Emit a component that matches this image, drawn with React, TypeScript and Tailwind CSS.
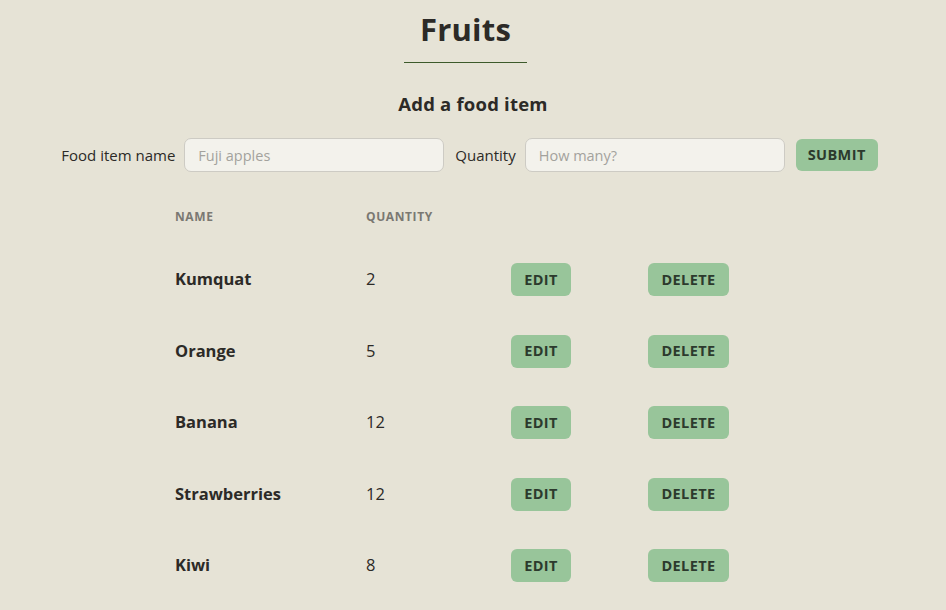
import React from "react";

const items = [
  { name: "Kumquat", qty: 2 },
  { name: "Orange", qty: 5 },
  { name: "Banana", qty: 12 },
  { name: "Strawberries", qty: 12 },
  { name: "Kiwi", qty: 8 },
];

export default function App() {
  return (
    <div
      className="min-h-[610px] w-full bg-[#e6e3d6] text-[#2c2a27]"
      style={{ fontFamily: '"Open Sans", "Noto Sans", sans-serif' }}
    >
      <div className="flex flex-col items-center pt-[9px] pr-[15px]">
        <h1 className="text-[31px] leading-[40px] font-bold tracking-[0.2px]">Fruits</h1>
        <div className="mt-[13px] h-px w-[123px] bg-[#3d5a2b]" />
      </div>
      <h2 className="mt-[29px] text-center text-[18.5px] leading-[24px] font-bold tracking-[0.2px]">Add a food item</h2>
      <form
        className="mt-[22px] flex items-center justify-center pr-[7px]"
        onSubmit={(e) => e.preventDefault()}
      >
        <label className="mr-[9px] text-[15px]">Food item name</label>
        <input
          className="mr-[11px] h-[34px] w-[260px] rounded-[7px] border border-[#cdcbc4] bg-[#f3f2ec] px-[13px] text-[14.5px] placeholder:text-[#a3a29d] outline-none"
          placeholder="Fuji apples"
        />
        <label className="mr-[9px] text-[15px]">Quantity</label>
        <input
          className="mr-[11px] h-[34px] w-[260px] rounded-[7px] border border-[#cdcbc4] bg-[#f3f2ec] px-[13px] text-[14.5px] placeholder:text-[#a3a29d] outline-none"
          placeholder="How many?"
        />
        <button className="h-[32px] w-[82px] rounded-[6px] bg-[#98c59a] text-[14.5px] font-bold tracking-[0.4px] text-[#2c3a2d]">
          SUBMIT
        </button>
      </form>
      <div className="mx-auto mt-[18px] grid w-[596px] grid-cols-[191px_145px_137px_123px]">
        <div className="flex h-[54px] items-center text-[12px] font-bold tracking-[0.6px] text-[#7a7872]">NAME</div>
        <div className="flex h-[54px] items-center text-[12px] font-bold tracking-[0.6px] text-[#7a7872]">QUANTITY</div>
        <div />
        <div />
        {items.map((it) => (
          <React.Fragment key={it.name}>
            <div className="flex h-[71.5px] items-center text-[16.5px] font-bold">{it.name}</div>
            <div className="flex h-[71.5px] items-center text-[16.5px]">{it.qty}</div>
            <div className="flex h-[71.5px] items-center">
              <button className="h-[33px] w-[60px] rounded-[6px] bg-[#98c59a] text-[14.5px] font-bold tracking-[0.4px] text-[#2c3a2d]">
                EDIT
              </button>
            </div>
            <div className="flex h-[71.5px] items-center">
              <button className="h-[33px] w-[81px] rounded-[6px] bg-[#98c59a] text-[14.5px] font-bold tracking-[0.4px] text-[#2c3a2d]">
                DELETE
              </button>
            </div>
          </React.Fragment>
        ))}
      </div>
    </div>
  );
}
